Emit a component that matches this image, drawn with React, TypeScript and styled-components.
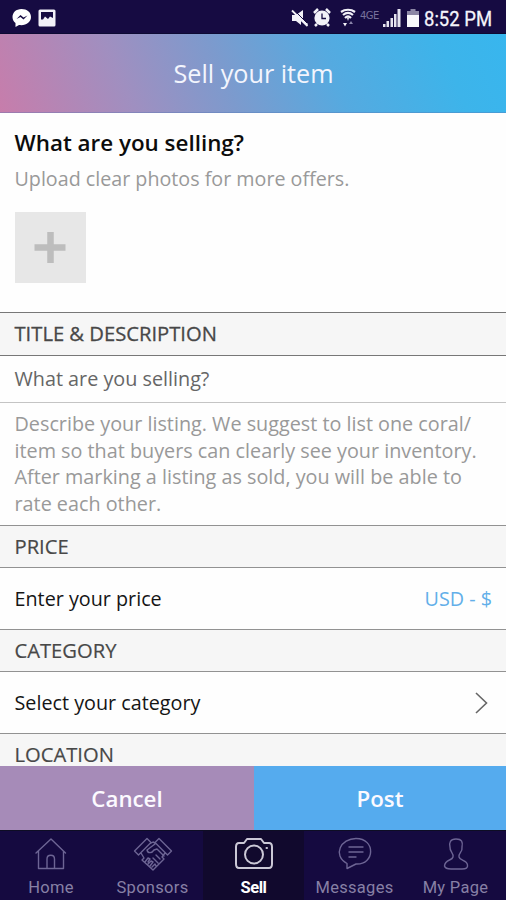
import React from "react";
import styled, { createGlobalStyle } from "styled-components";

const GlobalStyle = createGlobalStyle`
  * { box-sizing: border-box; }
  body { margin: 0; background: #fefefe; }
`;

const Screen = styled.div`
  display: flex;
  flex-direction: column;
  width: 506px;
  height: 900px;
  overflow: hidden;
  background: #fefefe;
  font-family: "Open Sans", sans-serif;
`;

const StatusBar = styled.header`
  flex: none;
  display: flex;
  align-items: center;
  justify-content: space-between;
  height: 34px;
  padding: 2px 14px 0 12px;
  background: #160b42;
  border-bottom: 1px solid #0d0a33;
`;

const StatusGroup = styled.div`
  display: flex;
  align-items: center;
`;

const StatusIcon = styled.svg<{ $gap?: number }>`
  display: block;
  flex: none;
  margin-right: ${(p) => p.$gap ?? 0}px;
`;

const Clock = styled.span`
  width: 68px;
  font: 400 21px/24px Roboto, sans-serif;
  color: #f5f4fa;
  -webkit-text-stroke: 0.3px #f5f4fa;
  white-space: nowrap;
  transform: translateY(0.5px) scaleX(0.88);
  transform-origin: left center;
`;

const NetworkTag = styled.span`
  width: 20px;
  margin-right: 3px;
  font: 400 10px/12px "DejaVu Sans", sans-serif;
  letter-spacing: -0.6px;
  color: #77719c;
  align-self: flex-start;
  margin-top: 4px;
`;

const TitleBar = styled.div`
  flex: none;
  display: flex;
  align-items: center;
  justify-content: center;
  height: 79px;
  padding: 0 0 0 1px;
  background: linear-gradient(68deg, #c77dab 0%, #a08fc0 25%, #7d9acd 44%, #55aae0 65%, #3db4ea 87%, #38b6ee 100%);
  border-bottom: 1px solid rgba(100, 110, 170, 0.35);
`;

const Title = styled.h1`
  margin: 0;
  font-size: 25.2px;
  font-weight: 400;
  line-height: 32px;
  color: #f3f5fd;
`;

const Upload = styled.section`
  flex: none;
  height: 199px;
  padding: 15px 15px 0 14.5px;
`;

const Question = styled.h2`
  margin: 0;
  font-size: 22.4px;
  font-weight: 600;
  line-height: 30px;
  color: #0c0c0c;
`;

const Hint = styled.p`
  margin: 6px 0 18px;
  font-size: 19.7px;
  line-height: 30px;
  color: #999;
`;

const AddPhoto = styled.button`
  display: flex;
  align-items: center;
  justify-content: center;
  width: 71px;
  height: 71px;
  padding: 0;
  border: 0;
  background: #e7e7e7;
`;

const SectionHead = styled.h3<{ $strong?: boolean; $last?: boolean }>`
  flex: none;
  display: flex;
  align-items: ${(p) => (p.$last ? "flex-start" : "center")};
  height: ${(p) => (p.$last ? 34 : p.$strong ? 44 : 43)}px;
  margin: 0;
  padding: ${(p) => (p.$last ? "8px 14.5px 0" : "0 14.5px 2px")};
  border: solid ${(p) => (p.$strong ? "#777" : "#929292")};
  border-width: 1.5px 0 ${(p) => (p.$last ? 0 : 1.5)}px;
  background: #f6f6f6;
  font-size: 20.2px;
  font-weight: 400;
  line-height: 24px;
  color: #484848;
  -webkit-text-stroke: ${(p) => (p.$strong ? 0.3 : 0.2)}px #484848;
`;

const TitleField = styled.div`
  flex: none;
  height: 47px;
  padding: 9px 14.5px 0;
  border-bottom: 1px solid #c4c4c4;
  font-size: 19.8px;
  line-height: 27px;
  color: #666;
`;

const Description = styled.p`
  flex: none;
  height: 122px;
  margin: 0;
  padding: 8px 14.5px 0;
  font-size: 19.8px;
  line-height: 26.7px;
  white-space: pre;
  color: #999;
`;

const Row = styled.div`
  flex: none;
  display: flex;
  align-items: center;
  justify-content: space-between;
  height: 61px;
  padding: 1px 14px 0 14.5px;
  font-size: 19.75px;
  line-height: 28px;
  color: #151515;
`;

const Currency = styled.span`
  color: #62afe9;
`;

const Form = styled.main`
  height: 653px;
  flex: none;
  display: flex;
  flex-direction: column;
  overflow: hidden;
`;

const Actions = styled.div`
  flex: none;
  display: grid;
  grid-template-columns: 254px 252px;
  height: 64px;
`;

const Action = styled.button<{ $color: string }>`
  border: 0;
  padding: 1px 0 0;
  background: ${(p) => p.$color};
  font: 600 22.3px/30px "Open Sans", sans-serif;
  color: #fcfaff;
`;

const TabBar = styled.nav`
  flex: none;
  display: grid;
  grid-template-columns: 102px 101px 101px 101px 101px;
  height: 70px;
  background: #150a40;
  border-top: 1px solid #0e0d24;
`;

const Tab = styled.a<{ $active?: boolean }>`
  display: flex;
  flex-direction: column;
  align-items: center;
  padding-top: 4px;
  background: ${(p) => (p.$active ? "#11092d" : "transparent")};
  color: ${(p) => (p.$active ? "#cbc8d6" : "#6d6594")};
`;

const TabLabel = styled.span<{ $active?: boolean }>`
  margin-top: 5px;
  font: ${(p) => (p.$active ? 700 : 400)} 16.5px/20px Roboto, sans-serif;
  letter-spacing: ${(p) => (p.$active ? -0.5 : 0.3)}px;
  color: ${(p) => (p.$active ? "#fff" : "#8780a5")};
  white-space: nowrap;
`;

const TabIcon = ({ children }: { children: React.ReactNode }) => (
  <svg width="44" height="38" viewBox="0 0 44 38" fill="none" stroke="currentColor" strokeWidth="1.4" strokeLinejoin="round" strokeLinecap="round">
    {children}
  </svg>
);

const tabs = [
  {
    label: "Home",
    icon: (
      <TabIcon>
        <path d="M7 18 22 4 36.500 18M9.500 16V33.500H34.500V16M18 33V24C18 19 25.500 19 25.500 24V33" />
      </TabIcon>
    ),
  },
  {
    label: "Sponsors",
    icon: (
      <TabIcon>
        <path d="M3.500 16 16 3.500 20 7.500 7.500 20ZM40.500 16 28 3.500 24 7.500 36.500 20ZM18.500 9 22 7 25 8.500M10 18 13 23 11 25 22 35 33 24 31 22 34 18M24 9 16 15C17 19 21 18 23 15L26 14 33 21M14 27 17 23 19 24 17 27M17 29 20 26 22 27 19 31M21 32 24 29 25 31M25 20 29 24M22 23 27 28" />
      </TabIcon>
    ),
  },
  {
    label: "Sell",
    active: true,
    icon: (
      <TabIcon>
        <g strokeWidth="2">
          <path d="M7 8H12L15 4H29L32 8H37C39.500 8 40 9.500 40 12V29C40 32 39 33 37 33H7C4 33 4 31 4 29V12C4 9 5 8 7 8Z" />
          <circle cx="22" cy="19.500" r="9" />
          <path d="M34.500 13H35" />
        </g>
      </TabIcon>
    ),
  },
  {
    label: "Messages",
    icon: (
      <TabIcon>
        <path d="M14 28.500C-1 20 8 3.500 23 3.500C43 3.500 42 30 23 29L14 33.500ZM16 12H30M16 17H30M16 22H23" />
      </TabIcon>
    ),
  },
  {
    label: "My Page",
    icon: (
      <TabIcon>
        <path d="M22 4C16 4 15 8 16 12C15.500 17 20 18 19 22C18 26 11 24 10.500 31C11 33 13 34 17 34H28C32 34 34 33 33.500 30C33 25 26 26 25 22C24 18 29 17 28 12C29 7 28 4 22 4Z" />
      </TabIcon>
    ),
  },
];

export default function App() {
  return (
    <Screen>
      <GlobalStyle />
      <StatusBar>
        <StatusGroup>
          <StatusIcon width="20" height="20" viewBox="0 0 20 20" $gap={6}>
            <path d="M9.500 1C4 1 .5 4.600.5 9C.5 12 2 14 3.500 15V19L7 17C14 18 19 14 19 9C19 4 15 1 9.500 1Z" fill="#fff" />
            <path d="m4.500 11 4-4 3 2.500 4-2-4 4-3-2.500Z" fill="#160b42" />
          </StatusIcon>
          <StatusIcon width="18" height="18" viewBox="0 0 18 18">
            <rect x=".5" y=".5" width="17" height="17" rx="1.500" fill="#f2f1f8" />
            <path d="M3 3H15V9L12 7.500 10 10 7 7.500 5 10.500H3Z" fill="#160b42" />
          </StatusIcon>
        </StatusGroup>
        <StatusGroup>
          <StatusIcon width="18" height="18" viewBox="0 0 18 18" $gap={4}>
            <path d="M1 6H5L12 1V10L17 15 15.500 17 10 12V16L5 12H1Z" fill="#f2f1f8" />
            <path d="m3 1 13 13" stroke="#160b42" strokeWidth="1" />
            <path d="m1 1.500 15.500 15.500" stroke="#f2f1f8" strokeWidth="1.800" />
          </StatusIcon>
          <StatusIcon width="18" height="19" viewBox="0 0 18 19" $gap={9}>
            <circle cx="9" cy="10" r="7.600" fill="#f2f1f8" />
            <path d="M1 5 5 1M17 5 13 1M4 16 2 18M14 16 16 18" stroke="#f2f1f8" strokeWidth="2.500" />
            <path d="M9 5.500V10.500H13" fill="none" stroke="#160b42" strokeWidth="1.300" />
          </StatusIcon>
          <StatusIcon width="16" height="19" viewBox="0 0 16 19" $gap={4}>
            <g fill="none" stroke="#f2f1f8" strokeWidth="2.200">
              <path d="M1 4C5 1 11 1 15 4M3 7C6 4.500 10 4.500 13 7M5 10C7 8 9 8 11 10" />
            </g>
            <path d="M7 10H9L8 13ZM3 15H7L5 18.500Z" fill="#f2f1f8" />
            <path d="m9 16 2-3 2 3Z" fill="#8b86ab" />
          </StatusIcon>
          <NetworkTag>4GE</NetworkTag>
          <StatusIcon width="18" height="18" viewBox="0 0 18 18" $gap={6}>
            <path d="M0 18V15H2.500V18M3.500 18V12H6V18M7.500 18V9H10V18M11 18V5H13.500V18M14.500 18V0H17.500V18" fill="#e6e4ef" />
          </StatusIcon>
          <StatusIcon width="12" height="18" viewBox="0 0 12 18" $gap={5}>
            <path d="M3.500 0H8.500V2H12V7H0V2H3.500Z" fill="#8b86a5" />
            <path d="M0 6H12V18H0Z" fill="#f8f8fc" />
          </StatusIcon>
          <Clock>8:52 PM</Clock>
        </StatusGroup>
      </StatusBar>
      <TitleBar>
        <Title>Sell your item</Title>
      </TitleBar>
      <Form>
        <Upload>
          <Question>What are you selling?</Question>
          <Hint>Upload clear photos for more offers.</Hint>
          <AddPhoto aria-label="Add photo">
            <svg width="32" height="32" viewBox="0 0 32 32">
              <path d="M16 0V31M0 15.500H31" transform="translate(.5 0)" stroke="#bdbdbd" strokeWidth="6.500" />
            </svg>
          </AddPhoto>
        </Upload>
        <SectionHead $strong>TITLE &amp; DESCRIPTION</SectionHead>
        <TitleField>What are you selling?</TitleField>
        <Description>
          {"Describe your listing. We suggest to list one coral/\nitem so that buyers can clearly see your inventory.\nAfter marking a listing as sold, you will be able to\nrate each other."}
        </Description>
        <SectionHead>PRICE</SectionHead>
        <Row>
          <span>Enter your price</span>
          <Currency>USD - $</Currency>
        </Row>
        <SectionHead>CATEGORY</SectionHead>
        <Row>
          <span>Select your category</span>
          <svg width="18" height="22" viewBox="0 0 18 22" fill="none" stroke="#666" strokeWidth="1.600">
            <path d="m2 1 10.500 10L2 21" />
          </svg>
        </Row>
        <SectionHead $last>LOCATION</SectionHead>
      </Form>
      <Actions>
        <Action $color="#a68bb8">Cancel</Action>
        <Action $color="#55abee">Post</Action>
      </Actions>
      <TabBar>
        {tabs.map((tab) => (
          <Tab key={tab.label} $active={tab.active}>
            {tab.icon}
            <TabLabel $active={tab.active}>{tab.label}</TabLabel>
          </Tab>
        ))}
      </TabBar>
    </Screen>
  );
}
